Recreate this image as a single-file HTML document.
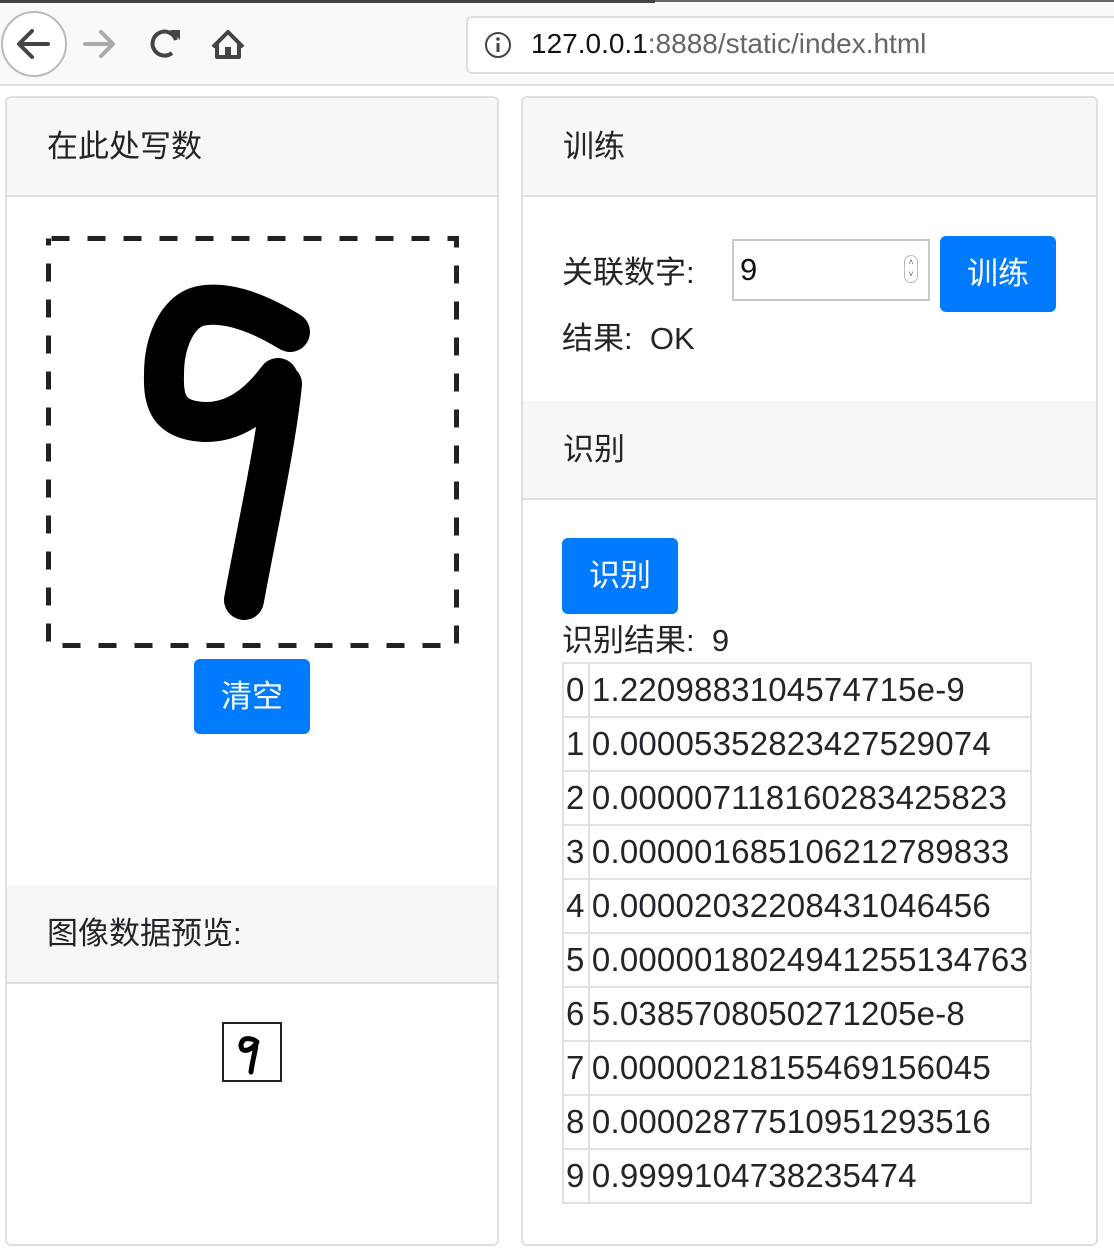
<!DOCTYPE html>
<html><head><meta charset="utf-8"><style>
*{margin:0;padding:0;box-sizing:border-box}
body{width:1114px;height:1260px;background:#fff;position:relative;overflow:hidden;font-family:"Liberation Sans","Noto Sans CJK SC",sans-serif;color:#212529}
.a{position:absolute}
.card{position:absolute;border:2px solid #dfdfdf;border-radius:6px;background:#fff;overflow:hidden}
.hd{position:absolute;left:0;right:0;background:#f7f7f7;border-bottom:2px solid #dfdfdf;font-size:31px;padding-left:40px}
.btn{position:absolute;background:#007bff;color:#fff;border-radius:6px;font-size:31px;text-align:center}
table{border-collapse:collapse;font-size:33px}
td{border:2px solid #dee2e6;height:54px;padding:0 2px;line-height:50px;white-space:nowrap;letter-spacing:0.2px}
</style></head><body>
<div class="a" style="left:0;top:0;width:1114px;height:86px;background:#f9f9fa;border-bottom:2px solid #e0e0e0"></div>
<div class="a" style="left:0;top:0;width:655px;height:3px;background:#444"></div>
<div class="a" style="left:655px;top:0;width:459px;height:2px;background:#666"></div>
<div class="a" style="left:1px;top:11px;width:66px;height:66px;border:2px solid #bbb;border-radius:50%;background:#fff"></div>
<svg class="a" style="left:0;top:0" width="260" height="86" viewBox="0 0 260 86">
<path d="M48 44H20M32 31L19 44L32 57" stroke="#444" stroke-width="4" fill="none" stroke-linecap="round" stroke-linejoin="round"/>
<path d="M85 44H113M101 32L113 44L101 56" stroke="#aaa" stroke-width="4" fill="none" stroke-linecap="round" stroke-linejoin="round"/>
<path d="M176 40A12 12 0 1 0 172 53" stroke="#444" stroke-width="4" fill="none"/>
<path d="M170 30L180 30L180 40Z" fill="#444"/>
<path d="M213 47L228 32L243 47M217 44V57H239V44" stroke="#444" stroke-width="4" fill="none" stroke-linejoin="round"/>
<rect x="225" y="47" width="6" height="10" fill="#444"/>
</svg>
<div class="a" style="left:466px;top:16px;width:660px;height:58px;border:2px solid #ddd;border-radius:6px;background:#fff"></div>
<svg class="a" style="left:484px;top:31px" width="28" height="28"><circle cx="14" cy="14" r="12" stroke="#444" stroke-width="2" fill="none"/><rect x="12.5" y="12" width="3" height="9" fill="#444"/><circle cx="14" cy="8" r="1.8" fill="#444"/></svg>
<div class="a" style="left:531px;top:28px;font-size:28px;color:#111">127.0.0.1<span style="color:#666">:8888/static/index.html</span></div>

<div class="card" style="left:5px;top:96px;width:494px;height:1150px">
 <div class="hd" style="top:0;height:99px;line-height:97px">在此处写数</div>
 <div class="hd" style="top:787px;height:99px;line-height:97px;border-top:0">图像数据预览:</div>
</div>
<svg class="a" style="left:44px;top:234px" width="418" height="416">
<rect x="4.5" y="4.5" width="408" height="407" fill="none" stroke="#222" stroke-width="5" stroke-dasharray="18 18" stroke-dashoffset="-3"/>
<path d="M246 98C220 82 185 66 156 72C132 78 120 110 120 140C119 170 126 186 160 188C190 189 215 170 234 144M238 150C232 210 212 300 200 366" fill="none" stroke="#000" stroke-width="40" stroke-linecap="round" stroke-linejoin="round"/>
</svg>
<div class="btn" style="left:194px;top:659px;width:116px;height:75px;line-height:75px">清空</div>
<div class="a" style="left:222px;top:1022px;width:60px;height:60px;border:2px solid #222;background:#fff"></div>
<svg class="a" style="left:224px;top:1024px" width="56" height="56"><path d="M33 18C30 15 25 14 21 15C17 17 16 22 18 25C21 28 27 26 32 20M32 20C31 30 28 38 27 48" fill="none" stroke="#000" stroke-width="5" stroke-linecap="round"/></svg>

<div class="card" style="left:521px;top:96px;width:577px;height:1150px">
 <div class="hd" style="top:0;height:99px;line-height:97px">训练</div>
 <div class="hd" style="top:303px;height:99px;line-height:97px">识别</div>
</div>
<div class="a" style="left:562px;top:247px;font-size:31px">关联数字:</div>
<div class="a" style="left:732px;top:239px;width:198px;height:62px;border:2px solid #c8c8c8;background:#fff;font-size:31px;line-height:58px;padding-left:6px;color:#111">9</div>
<div class="a" style="left:904px;top:255px;width:14px;height:28px;border:1px solid #bbb;border-radius:7px;font-size:9px;line-height:12px;text-align:center;color:#666">˄<br>˅</div>
<div class="btn" style="left:940px;top:236px;width:116px;height:76px;line-height:76px">训练</div>
<div class="a" style="left:562px;top:313px;font-size:31px">结果:&nbsp;&nbsp;OK</div>
<div class="btn" style="left:562px;top:538px;width:116px;height:76px;line-height:76px">识别</div>
<div class="a" style="left:562px;top:615px;font-size:31px">识别结果:&nbsp;&nbsp;9</div>
<table class="a" style="left:562px;top:662px;width:470px">
<tr><td style="width:26px">0</td><td>1.2209883104574715e-9</td></tr>
<tr><td>1</td><td>0.00005352823427529074</td></tr>
<tr><td>2</td><td>0.000007118160283425823</td></tr>
<tr><td>3</td><td>0.000001685106212789833</td></tr>
<tr><td>4</td><td>0.00002032208431046456</td></tr>
<tr><td>5</td><td>0.0000018024941255134763</td></tr>
<tr><td>6</td><td>5.0385708050271205e-8</td></tr>
<tr><td>7</td><td>0.00000218155469156045</td></tr>
<tr><td>8</td><td>0.00002877510951293516</td></tr>
<tr><td>9</td><td>0.9999104738235474</td></tr>
</table>
</body></html>
